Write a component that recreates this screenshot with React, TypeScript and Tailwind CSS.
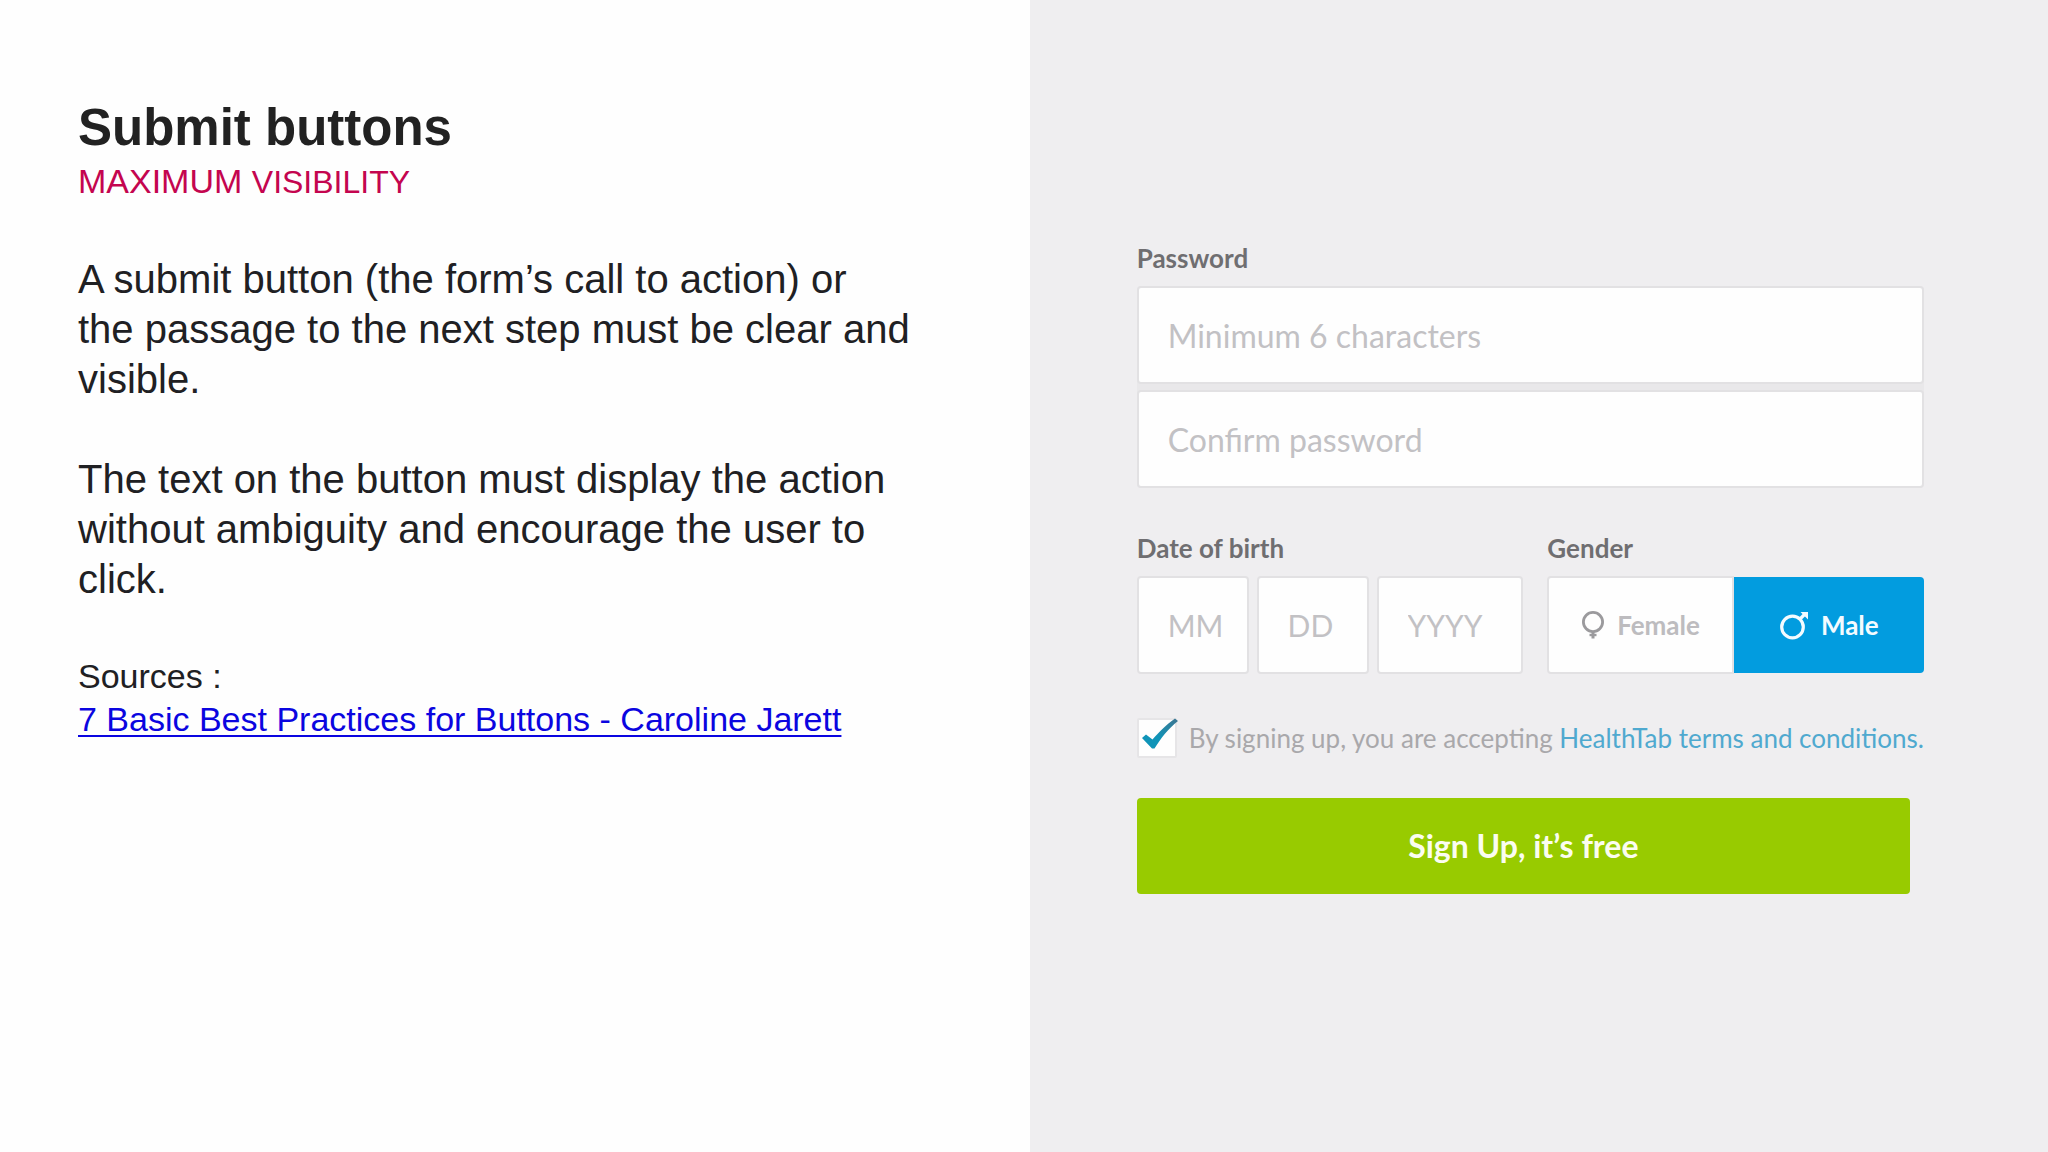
// App.tsx
// Slide about submit buttons: copy on the left, sample sign up form on the right.
import { useState } from "react";

type Gender = "female" | "male";

const FIELD =
	"h-[98px] w-full min-w-0 rounded-[4px] border-2 border-[#e2e1e3] bg-[#fefefe] pl-[29px] text-[#8a898c] placeholder:text-[#c2c1c4] placeholder:opacity-100 outline-none";

const LABEL = "block text-[26px] leading-8 font-bold text-[#6f6e71]";

export default function App() {
	return (
		<div className="grid min-h-screen grid-cols-[1030fr_1018fr] bg-[#fefefe]">
			<Copy />
			<SignUpPanel />
		</div>
	);
}

function Copy() {
	return (
		<main className="px-[78px] pt-[99px] pb-16 font-['Liberation_Sans',Arial,sans-serif] text-[#202023]">
			<h1 className="text-[51px] leading-[58px] font-bold text-[#222]">Submit buttons</h1>
			<p className="text-[34px] leading-[48px] text-[#c4054f]">
				MAXIMUM <span className="text-[32px]">VISIBILITY</span>
			</p>
			<div className="mt-12 max-w-[840px] space-y-[50px] text-[40px] leading-[50px]">
				<p>
					A submit button (the form’s call to action) or
					<br />
					the passage to the next step must be clear and visible.
				</p>
				<p>
					The text on the button must display the action without ambiguity and encourage the user to
					click.
				</p>
			</div>
			<div className="mt-[51px] text-[34px] leading-[43px]">
				<p>Sources :</p>
				<a href="#sources" className="text-[#0b05e0] underline decoration-2 underline-offset-4">
					7 Basic Best Practices for Buttons - Caroline Jarett
				</a>
			</div>
		</main>
	);
}

function SignUpPanel() {
	const [gender, setGender] = useState<Gender>("male");
	const [accepted, setAccepted] = useState(true);

	return (
		<aside className="bg-[#efeef0] pt-[242px] pr-[124px] pb-16 pl-[107px] font-[Lato,sans-serif]">
			<form onSubmit={(e) => e.preventDefault()}>
				<label htmlFor="password" className={LABEL}>
					Password
				</label>
				<div className="mt-3 flex flex-col gap-1.5 rounded-[4px] bg-[#e9e8ea]">
					<input
						id="password"
						type="password"
						placeholder="Minimum 6 characters"
						className={`${FIELD} text-[32px]`}
					/>
					<input
						type="password"
						aria-label="Confirm password"
						placeholder="Confirm password"
						className={`${FIELD} text-[32px]`}
					/>
				</div>

				<div className="mt-11 grid grid-cols-[386fr_376fr] gap-6">
					<div>
						<label htmlFor="month" className={LABEL}>
							Date of birth
						</label>
						<div className="mt-3 grid grid-cols-[112fr_112fr_147fr] gap-2">
							<input id="month" placeholder="MM" className={`${FIELD} text-[30px]`} />
							<input aria-label="Day" placeholder="DD" className={`${FIELD} text-[30px]`} />
							<input aria-label="Year" placeholder="YYYY" className={`${FIELD} text-[30px]`} />
						</div>
					</div>

					<fieldset>
						<legend className={LABEL}>Gender</legend>
						<div className="mt-3 grid h-[98px] grid-cols-[186fr_190fr] text-[26px] font-bold">
							<GenderOption
								value="female"
								text="Female"
								checked={gender === "female"}
								onSelect={setGender}
							/>
							<GenderOption
								value="male"
								text="Male"
								checked={gender === "male"}
								onSelect={setGender}
							/>
						</div>
					</fieldset>
				</div>

				<div className="mt-11 flex items-center gap-3">
					<div className="relative size-10 shrink-0">
						<input
							id="terms"
							type="checkbox"
							checked={accepted}
							onChange={(e) => setAccepted(e.target.checked)}
							className="block size-10 appearance-none rounded-[2px] border-2 border-[#e6e5e7] bg-[#fefefe]"
						/>
						{accepted && <CheckMark />}
					</div>
					<label htmlFor="terms" className="text-[26px] leading-8 whitespace-nowrap text-[#a9a8ab]">
						By signing up, you are accepting{" "}
						<a href="#terms" className="text-[#4fa9cf]">
							HealthTab terms and conditions.
						</a>
					</label>
				</div>

				<div className="mt-10 pr-[14px]">
					<button
						type="submit"
						className="h-24 w-full rounded-[4px] bg-[#98cb00] text-[32px] font-bold text-[#fbfdf0]"
					>
						Sign Up, it’s free
					</button>
				</div>
			</form>
		</aside>
	);
}

interface GenderOptionProps {
	value: Gender;
	text: string;
	checked: boolean;
	onSelect: (value: Gender) => void;
}

function GenderOption({ value, text, checked, onSelect }: GenderOptionProps) {
	return (
		<label
			className={`relative flex items-center justify-center gap-3 ${
				value === "female" ? "rounded-l-[4px]" : "rounded-r-[4px]"
			} ${
				checked
					? "my-px bg-[#029cdf] text-[#f4fbff]"
					: "border-2 border-[#e2e1e3] bg-[#fefefe] text-[#bdbcbf]"
			}`}
		>
			<input
				type="radio"
				name="gender"
				value={value}
				checked={checked}
				onChange={() => onSelect(value)}
				className="sr-only"
			/>
			{value === "female" ? <FemaleIcon /> : <MaleIcon />}
			{text}
		</label>
	);
}

function FemaleIcon() {
	return (
		<svg viewBox="0 0 24 30" className="h-[30px] w-6 text-[#9b9a9d]" fill="none" stroke="currentColor">
			<circle cx="12" cy="12" r="9.6" strokeWidth="2.8" />
			<path d="M12 21.5V28.500" strokeWidth="3" />
			<path d="M8.500 25h7" strokeWidth="2.4" />
		</svg>
	);
}

function MaleIcon() {
	return (
		<svg viewBox="0 0 30 30" className="size-[30px]" fill="none" stroke="currentColor">
			<circle cx="13.5" cy="17" r="10.8" strokeWidth="3.2" />
			<path d="M20.500 9.500L26 4" strokeWidth="3.2" />
			<path d="M21.500 2H29v7.500z" fill="currentColor" stroke="none" />
		</svg>
	);
}

function CheckMark() {
	return (
		<svg
			viewBox="0 0 44 40"
			className="pointer-events-none absolute -top-0.5 left-0 h-10 w-11"
			fill="url(#tick)"
		>
			<defs>
				<linearGradient id="tick" x1="0" y1="1" x2="1" y2="0">
					<stop offset="0.4" stopColor="#0f94b8" />
					<stop offset="1" stopColor="#3f7590" />
				</linearGradient>
			</defs>
			<path d="M5 22L9 18.500l6.500 5C21 17 29 9 38 2.500L41 5C31 13 24 22 17.500 32.500H15z" />
		</svg>
	);
}
